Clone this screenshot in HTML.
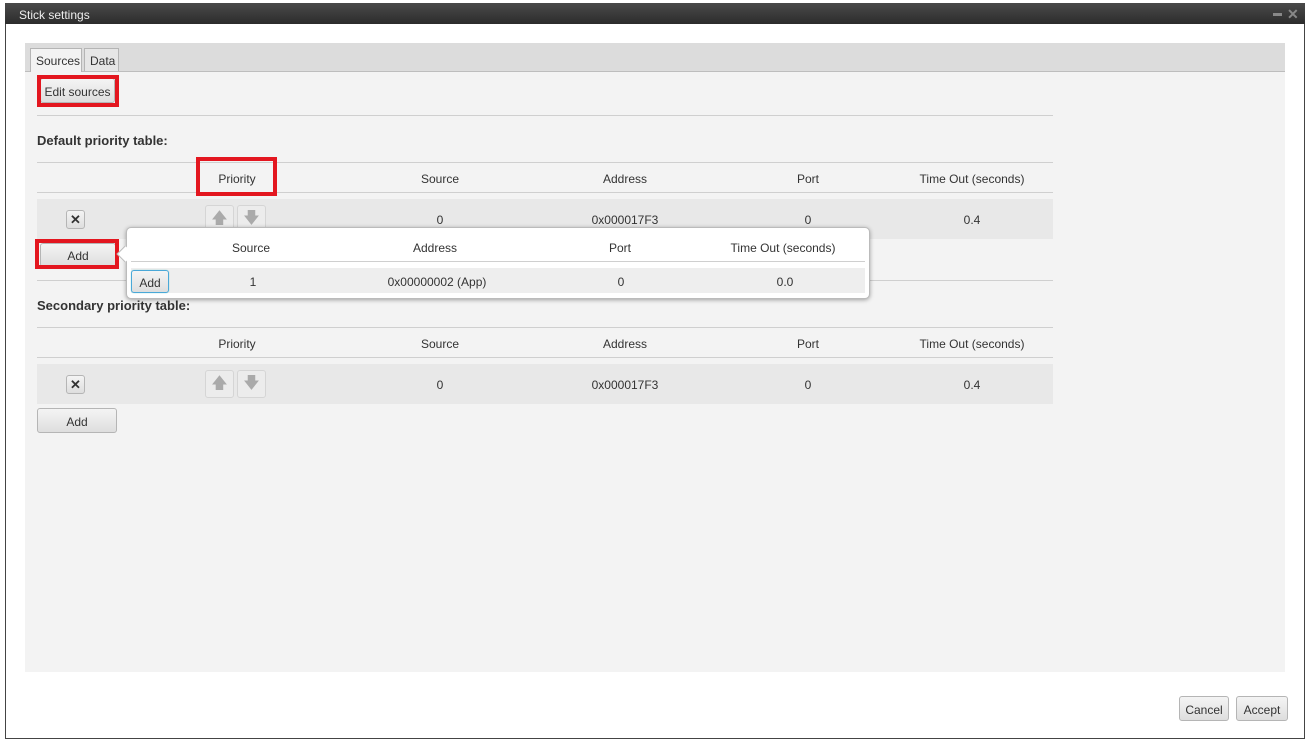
<!DOCTYPE html><html><head><style>
*{margin:0;padding:0;box-sizing:border-box}
body{width:1310px;height:741px;background:#fff;font-family:"Liberation Sans",sans-serif;font-size:12px;color:#333;position:relative;overflow:hidden}
.a{position:absolute}
.c{position:absolute;transform:translateX(-50%);white-space:nowrap}
.btn{position:absolute;background:linear-gradient(#f4f4f4,#dedede);border:1px solid #b5b5b5;border-radius:3px;text-align:center;color:#333}
.red{position:absolute;border:4px solid #e3161f}
.ln{position:absolute;height:1px;background:#cfcfcf}
</style></head><body>
<div class="a" style="left:5px;top:3px;width:1300px;height:736px;border:1px solid #444;"></div>
<div class="a" style="left:5px;top:3px;width:1300px;height:21px;background:linear-gradient(#4a4a4a,#2c2c2c);color:#eee;padding:5px 0 0 14px;font-size:12px">Stick settings</div>
<div class="a" style="left:1273px;top:13px;width:9px;height:3px;background:#888"></div>
<div class="a" style="left:1287px;top:6px;color:#888;font-size:14px;font-weight:bold">✕</div>
<div class="a" style="left:25px;top:43px;width:1260px;height:629px;background:#f3f3f3"></div>
<div class="a" style="left:25px;top:43px;width:1260px;height:29px;background:#dcdcdc;border-bottom:1px solid #bdbdbd"></div>
<div class="a" style="left:30px;top:48px;width:52px;height:24px;background:#f3f3f3;border:1px solid #b5b5b5;border-bottom:none;padding:5px 0 0 5px">Sources</div>
<div class="a" style="left:84px;top:48px;width:35px;height:23px;background:#e6e6e6;border:1px solid #b5b5b5;border-bottom:none;padding:5px 0 0 5px">Data</div>
<div class="btn" style="left:40px;top:78px;width:75px;height:25px;padding-top:6px">Edit sources</div>
<div class="red" style="left:37px;top:75px;width:82px;height:32px"></div>
<div class="ln" style="left:37px;top:115px;width:1016px"></div>
<div class="a" style="left:37px;top:133px;font-weight:bold;font-size:13px">Default priority table:</div>
<div class="ln" style="left:37px;top:162px;width:1016px"></div>
<div class="ln" style="left:37px;top:192px;width:1016px"></div>
<div class="c" style="left:237px;top:172px">Priority</div><div class="c" style="left:440px;top:172px">Source</div><div class="c" style="left:625px;top:172px">Address</div><div class="c" style="left:808px;top:172px">Port</div><div class="c" style="left:972px;top:172px">Time Out (seconds)</div>
<div class="red" style="left:196px;top:157px;width:81px;height:39px"></div>
<div class="a" style="left:37px;top:199px;width:1016px;height:40px;background:#e8e8e8"></div>
<div class="btn" style="left:66px;top:210px;width:19px;height:19px;font-weight:bold;font-size:13px;line-height:17px">✕</div>
<div class="btn" style="left:205px;top:205px;width:29px;height:28px;background:#ececec;border-color:#d5d5d5;color:#aaa;font-size:16px;line-height:26px">🡅</div>
<div class="btn" style="left:237px;top:205px;width:29px;height:28px;background:#ececec;border-color:#d5d5d5;color:#aaa;font-size:16px;line-height:26px">🡇</div>
<div class="c" style="left:440px;top:213px">0</div><div class="c" style="left:625px;top:213px">0x000017F3</div><div class="c" style="left:808px;top:213px">0</div><div class="c" style="left:972px;top:213px">0.4</div>
<div class="btn" style="left:40px;top:243px;width:76px;height:24px;padding-top:5px">Add</div>
<div class="red" style="left:35px;top:239px;width:84px;height:30px"></div>
<div class="ln" style="left:37px;top:280px;width:1016px"></div>
<div class="a" style="left:37px;top:298px;font-weight:bold;font-size:13px">Secondary priority table:</div>
<div class="ln" style="left:37px;top:327px;width:1016px"></div>
<div class="ln" style="left:37px;top:357px;width:1016px"></div>
<div class="c" style="left:237px;top:337px">Priority</div><div class="c" style="left:440px;top:337px">Source</div><div class="c" style="left:625px;top:337px">Address</div><div class="c" style="left:808px;top:337px">Port</div><div class="c" style="left:972px;top:337px">Time Out (seconds)</div>
<div class="a" style="left:37px;top:364px;width:1016px;height:40px;background:#e8e8e8"></div>
<div class="btn" style="left:66px;top:375px;width:19px;height:19px;font-weight:bold;font-size:13px;line-height:17px">✕</div>
<div class="btn" style="left:205px;top:370px;width:29px;height:28px;background:#ececec;border-color:#d5d5d5;color:#aaa;font-size:16px;line-height:26px">🡅</div>
<div class="btn" style="left:237px;top:370px;width:29px;height:28px;background:#ececec;border-color:#d5d5d5;color:#aaa;font-size:16px;line-height:26px">🡇</div>
<div class="c" style="left:440px;top:378px">0</div><div class="c" style="left:625px;top:378px">0x000017F3</div><div class="c" style="left:808px;top:378px">0</div><div class="c" style="left:972px;top:378px">0.4</div>
<div class="btn" style="left:37px;top:408px;width:80px;height:25px;padding-top:6px">Add</div>
<div class="a" style="left:126px;top:227px;width:744px;height:72px;background:#fff;border:1px solid #bbb;border-radius:5px;box-shadow:0 1px 4px rgba(0,0,0,.35)"></div>
<div class="a" style="left:119px;top:248px;width:12px;height:12px;background:#fff;border-left:1px solid #bbb;border-bottom:1px solid #bbb;transform:rotate(45deg)"></div>
<div class="ln" style="left:131px;top:261px;width:734px"></div>
<div class="c" style="left:251px;top:241px">Source</div><div class="c" style="left:435px;top:241px">Address</div><div class="c" style="left:620px;top:241px">Port</div><div class="c" style="left:783px;top:241px">Time Out (seconds)</div>
<div class="a" style="left:131px;top:268px;width:734px;height:25px;background:#eee"></div>
<div class="btn" style="left:131px;top:270px;width:38px;height:23px;border:1px solid #4aa8d8;box-shadow:0 0 1px #7cc;padding-top:5px">Add</div>
<div class="c" style="left:253px;top:275px">1</div><div class="c" style="left:437px;top:275px">0x00000002 (App)</div><div class="c" style="left:621px;top:275px">0</div><div class="c" style="left:785px;top:275px">0.0</div>
<div class="btn" style="left:1179px;top:696px;width:50px;height:25px;padding-top:6px">Cancel</div>
<div class="btn" style="left:1236px;top:696px;width:52px;height:25px;padding-top:6px">Accept</div>
</body></html>
